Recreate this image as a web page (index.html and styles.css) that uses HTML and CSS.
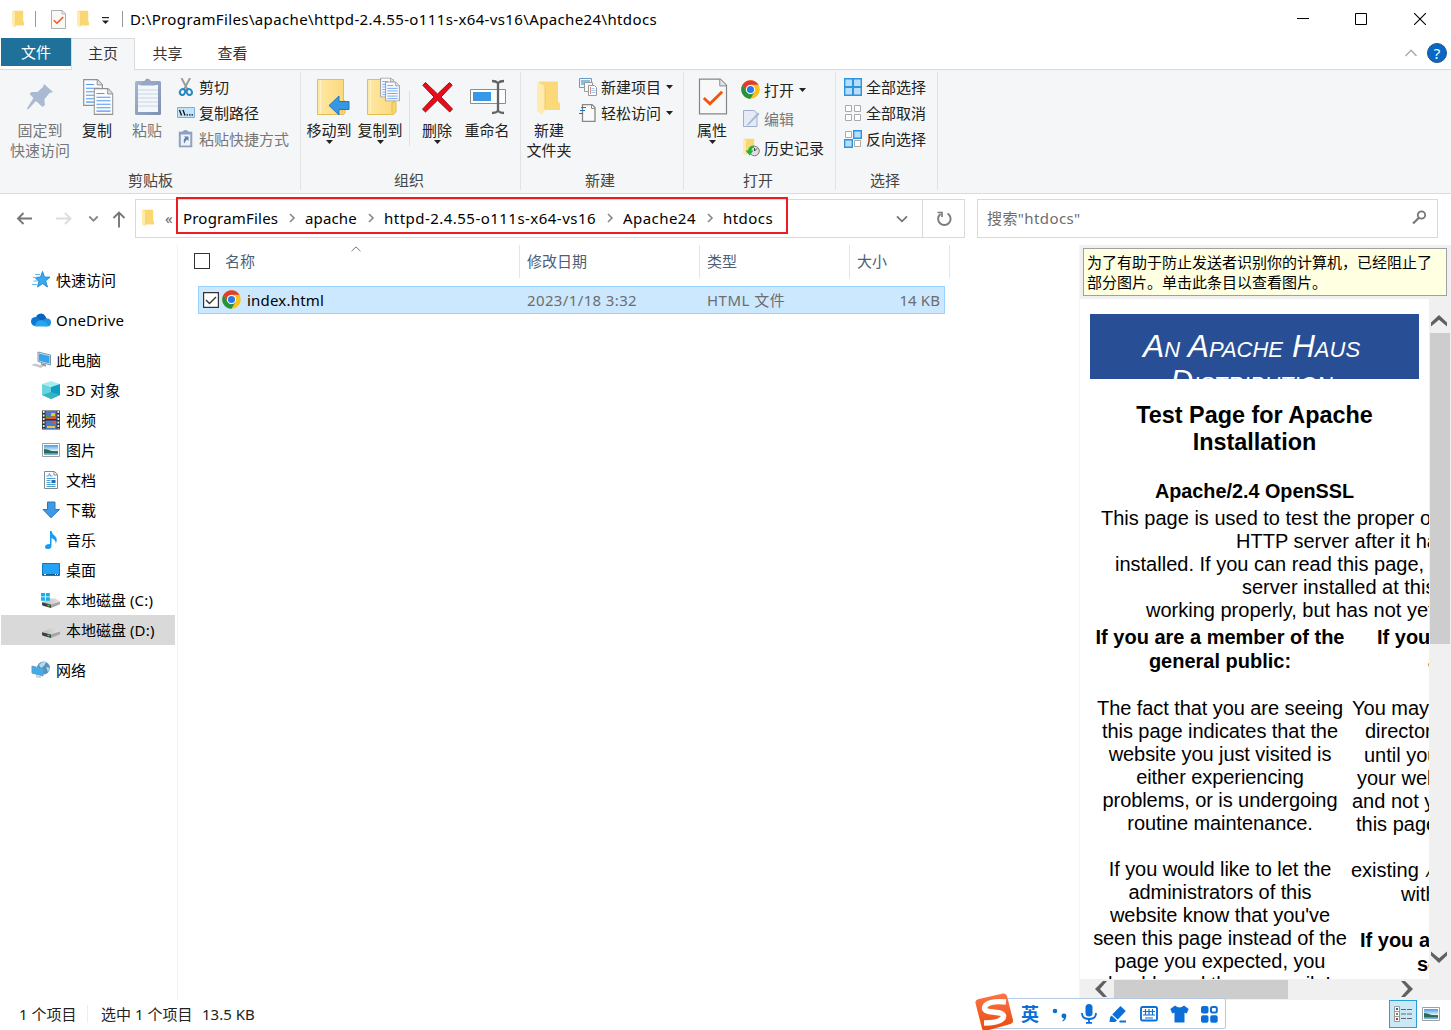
FILE: index.html
```html
<!DOCTYPE html>
<html lang="zh-CN">
<head>
<meta charset="utf-8">
<title>htdocs</title>
<link rel="stylesheet" href="styles.css">
</head>
<body>
<svg class="defs" width="0" height="0">
  <defs>
    <linearGradient id="gold" x1="0" x2="1"><stop offset="0" stop-color="#ffe9a6"/><stop offset="1" stop-color="#fbd97c"/></linearGradient>
    <linearGradient id="paste" x1="0" y1="0" x2="1" y2="1"><stop offset="0" stop-color="#a5b6cf"/><stop offset="1" stop-color="#7e90b2"/></linearGradient>
    <linearGradient id="sky" x1="0" y1="0" x2="0" y2="1"><stop offset="0" stop-color="#4a9be4"/><stop offset=".55" stop-color="#d8effa"/><stop offset=".56" stop-color="#3a7a68"/><stop offset=".75" stop-color="#3c7c9c"/><stop offset="1" stop-color="#8cc4e4"/></linearGradient>
    <linearGradient id="orange" x1="0" y1="0" x2="0" y2="1"><stop offset="0" stop-color="#fb7448"/><stop offset="1" stop-color="#ea4a0c"/></linearGradient>
    <linearGradient id="top" x1="0" x2="1"><stop offset="0" stop-color="#bdbdbd"/><stop offset="1" stop-color="#e4e4e4"/></linearGradient>
  </defs>
  <symbol id="folder" viewBox="0 0 13 18"><path d="M2 .8h10.200v10.500l.8 1v3.200H2z" fill="#fbd772"/><path d="M1 .8l3.800 1.800v13.600L4 17.600 1 15.400z" fill="#ffebad"/><path d="M4.600 2.800v13" stroke="#eec65c" stroke-width=".6"/></symbol>
  <symbol id="chrome" viewBox="0 0 48 48"><circle cx="24" cy="24" r="23.500" fill="#fbc116"/><path d="M3.700 12.200A23.500 23.500 0 0 1 44.400 12.300H24A11.700 11.700 0 0 0 13.900 29.900z" fill="#e33b2e"/><path d="M3.700 12.200L13.900 29.900A11.700 11.700 0 0 0 34.100 29.900L23.900 47.500A23.500 23.500 0 0 1 3.700 12.200z" fill="#229342"/><circle cx="24" cy="24" r="11.600" fill="#fff"/><circle cx="24" cy="24" r="9" fill="#2a78e8"/></symbol>
  <symbol id="picture" viewBox="0 0 18 14"><path d="M.5.500h17v13H.5z" fill="#fff" stroke="#a0a0a0"/><path d="M2 2h14v10H2z" fill="url(#sky)"/><path d="M2 6c5 0 7 3 14 3v1H2z" fill="#2c6a5c"/></symbol>
  <symbol id="check-page" viewBox="0 0 30 38"><path d="M1 1h21.500L29 7.500V37H1z" fill="#f8f8f8" stroke="#858585" stroke-width="1.300"/><path d="M22 1v7h7" fill="#e6e6e6" stroke="#858585"/><path d="M5.500 20.500l6.300 6L24.500 14" fill="none" stroke="#f1560d" stroke-width="3"/></symbol>
  <symbol id="page" viewBox="0 0 20 27"><path d="M.7.700h13.800l4.800 5V26.300H.7z" fill="#f9fbff" stroke="#919191" stroke-width="1.200"/><path d="M14.200.8v5.100h5" fill="#e3e3e3" stroke="#919191"/><path d="M3 5.500h8M3 9.300h14M3 12.700h14M3 16.200h14M3 19.700h14M3 23.100h14" stroke="#5796ef" stroke-width="1.100"/></symbol>
  <symbol id="chev-r" viewBox="0 0 8 10"><path d="M2 1l4 4-4 4" fill="none" stroke="#888" stroke-width="1.600"/></symbol>
  <symbol id="chev-d" viewBox="0 0 12 8"><path d="M1 1.300l5 5 5-5" fill="none" stroke="#747474" stroke-width="1.800"/></symbol>
  <symbol id="caret" viewBox="0 0 7 4"><path d="M0 0h7L3.500 4z" fill="#222"/></symbol>
  <symbol id="drive" viewBox="0 0 18 10"><path d="M0 4.200L7.500.5h6L18 3.500 9 6.500z" fill="url(#top)"/><path d="M0 4.200l9 2.300V10L1 7.800q-1-.5-1-1.500z" fill="#3f3f3f"/><path d="M9 6.500l9-3v2.800L9 10z" fill="#a5a5a5"/><path d="M5.500 7.200l2 .5" stroke="#35e04b" stroke-width="1.400"/></symbol>
</svg>

<header class="titlebar">
  <svg class="t-folder" width="13" height="18"><use href="#folder"/></svg>
  <i class="t-sep"></i>
  <svg class="t-check" width="15" height="19" viewBox="0 0 30 38"><use href="#check-page"/></svg>
  <svg class="t-folder2" width="13" height="18"><use href="#folder"/></svg>
  <svg class="t-caret" width="7" height="8" viewBox="0 0 7 8"><path d="M0 .6h7" stroke="#222" stroke-width="1.200"/><path d="M0 3.500h7L3.500 7z" fill="#222"/></svg>
  <i class="t-sep t-sep2"></i>
  <span class="path-title">D:\ProgramFiles\apache\httpd-2.4.55-o111s-x64-vs16\Apache24\htdocs</span>
  <div class="win-buttons">
    <svg width="12" height="12" viewBox="0 0 12 12"><path d="M0 5.500h12" stroke="#000"/></svg>
    <svg width="12" height="12" viewBox="0 0 12 12"><path d="M.5.500h11v11H.5z" fill="none" stroke="#000"/></svg>
    <svg width="12" height="12" viewBox="0 0 12 12"><path d="M0 0l12 12M12 0L0 12" stroke="#000" stroke-width="1.100"/></svg>
  </div>
</header>

<nav class="tabs">
  <span class="tab file">文件</span>
  <span class="tab active">主页</span>
  <span class="tab">共享</span>
  <span class="tab">查看</span>
  <div class="tab-tools">
    <svg width="12" height="8" viewBox="0 0 12 8"><path d="M.5 7L6 1.200 11.500 7" fill="none" stroke="#aaa" stroke-width="1.400"/></svg>
    <span class="help">?</span>
  </div>
</nav>

<section class="ribbon">
  <div class="group g-clip">
    <div class="tools">
      <div class="big off w70"><svg class="ico" viewBox="0 0 42 42"><path d="M25 8l9 8-3.500 1-5.200 6.500.7 5.500-2.500 2-6.500-6L9 33.500 8 32.300 14.500 22 10.500 18l2-2h6l5.500-5z" fill="#a9bad2"/></svg><span>固定到<br>快速访问</span></div>
      <div class="big w44"><svg class="ico" viewBox="0 0 42 42"><use href="#page" x="7" y="3" width="20" height="27"/><use href="#page" x="17.500" y="12" width="20" height="27"/></svg><span>复制</span></div>
      <div class="big off w56"><svg class="ico" viewBox="0 0 42 42"><rect x="9" y="5" width="26" height="34" rx="1.500" fill="url(#paste)"/><path d="M12 9h20v27H12z" fill="#f3f6fb"/><path d="M12 14h20M12 18h20M12 22h20M12 26h20M12 30h20" stroke="#c9d5e8"/><path d="M14.500 9.500q0-4 4-4.500 1-2.500 3-2.500T25 5q4 .5 4 4.500z" fill="#95a7c4"/></svg><span>粘贴</span></div>
      <div class="smalls s-clip">
        <div class="small"><svg width="18" height="18" viewBox="0 0 18 18"><path d="M4.500 0l6 11.500M13 0L7 11.500" stroke="#9a9a9a" stroke-width="1.900"/><ellipse cx="5.500" cy="14" rx="2.500" ry="3" fill="none" stroke="#2389c5" stroke-width="2" transform="rotate(25 5.500 14)"/><ellipse cx="12.300" cy="14" rx="2.500" ry="3" fill="none" stroke="#2389c5" stroke-width="2" transform="rotate(-25 12.300 14)"/></svg><span>剪切</span></div>
        <div class="small"><svg width="18" height="18" viewBox="0 0 18 18"><path d="M.5 3.500h17v10H.5z" fill="#c1e3fb" stroke="#7bb0d3"/><path d="M2.500 6l2 5.500M6 6l2 5.500M9.500 10.800h1.500M12 10.800h1.500M14.500 10.800H16" stroke="#111" stroke-width="1.300"/></svg><span>复制路径</span></div>
        <div class="small off"><svg width="18" height="18" viewBox="0 0 18 18"><path d="M1.800 1.700h13.500v15.600H1.800z" fill="#8fa1bf"/><path d="M3.800 4.500h9.500v11H3.800z" fill="#eef2f8"/><path d="M5 3.500Q5.500 0 8.500 0T12 3.500z" fill="#8fa1bf"/><path d="M7 6.500h4.500V11L10 9.500q-2 1.500-2.500 4-2-3 .7-5.700z" fill="#657fa9"/></svg><span>粘贴快捷方式</span></div>
      </div>
    </div>
    <div class="group-name">剪贴板</div>
  </div>
  <div class="group g-org">
    <div class="tools">
      <div class="big w50"><svg class="ico" viewBox="0 0 42 42"><path d="M9.500 3.500h26v35h-26z" fill="url(#gold)" stroke="#e5bd50"/><path d="M12.500 4v34" stroke="#fff2c5"/><path d="M34 37V26q3-3 3 0v11l-2 2" fill="#f9d66d" stroke="#e5bd50"/><path d="M21 29.500L31 20v5.500h10v8H31V39z" fill="#3697e5" stroke="#1d79c2"/></svg><span>移动到</span><svg class="down" width="7" height="4"><use href="#caret"/></svg></div>
      <div class="big w52"><svg class="ico" viewBox="0 0 42 42"><path d="M8.500 3.500h26v35h-26z" fill="url(#gold)" stroke="#e5bd50"/><path d="M11.500 4v34" stroke="#fff2c5"/><path d="M33 37V27q4-3 4 0v9l-2.500 2.500" fill="#f9d66d" stroke="#e5bd50"/><use href="#page" x="21" y="1.500" width="15" height="20"/><use href="#page" x="26" y="5.500" width="15" height="20"/></svg><span>复制到</span><svg class="down" width="7" height="4"><use href="#caret"/></svg></div>
      <i class="inner-sep"></i>
      <div class="big w54"><svg class="ico" viewBox="0 0 42 42"><path d="M9.500 6.500L21.500 18 33.500 6.500l2.700 2.700L25 21l11.500 12-2.800 3-12.200-11.800L9.500 36l-3-2.800L18 21 6.800 9.300z" fill="#e90c18" stroke="#991018" stroke-width="1"/></svg><span>删除</span><svg class="down" width="7" height="4"><use href="#caret"/></svg></div>
      <div class="big w46"><svg class="ico" viewBox="0 0 42 42"><path d="M4.500 13.500h35v14h-35z" fill="#fff" stroke="#8d8d8d"/><path d="M7 16h18v9H7z" fill="#3998e6"/><path d="M26 5q4 0 6 2 2-2 6-2M32 6v30M26 37q4 0 6-2 2 2 6 2" fill="none" stroke="#636363" stroke-width="2.300"/></svg><span>重命名</span></div>
    </div>
    <div class="group-name">组织</div>
  </div>
  <div class="group g-new">
    <div class="tools">
      <div class="big w52"><svg class="ico" viewBox="0 0 42 42"><path d="M11 5.500h19v20l2 2V34H11z" fill="#fbd978"/><path d="M9 5.500l8 5v24l-3 4-5-3.500z" fill="#ffebb0"/><path d="M17 10v23" stroke="#eec966"/></svg><span>新建<br>文件夹</span></div>
      <div class="smalls s-new">
        <div class="small"><svg width="18" height="18" viewBox="0 0 18 18"><path d="M.5.500h12v9H.5z" fill="#eef7fd" stroke="#6b9cbe"/><path d="M2 2h9v5H2z" fill="#8cbfdd"/><path d="M5.500 4.500h8v9h-8z" fill="#f7f7f7" stroke="#999"/><path d="M9.500 7.500h6l2 2v8h-8z" fill="#fff" stroke="#999"/><path d="M11.500 9v7" stroke="#dc8c8c"/><path d="M12.500 10.500h3M12.500 12.500h4M12.500 14.500h4" stroke="#a9c5ee"/></svg><span>新建项目</span><svg class="side" width="7" height="4"><use href="#caret"/></svg></div>
        <div class="small"><svg width="18" height="18" viewBox="0 0 18 18"><path d="M3.500.600h9.500l3 3v13.800H3.500z" fill="#fafafa" stroke="#888" stroke-width="1.300"/><path d="M12.500 1v3.500H16" fill="none" stroke="#888"/><path d="M2 3.500h5M1 6.500h5M0 9.500h4" stroke="#1879bd" stroke-width="1.200"/></svg><span>轻松访问</span><svg class="side" width="7" height="4"><use href="#caret"/></svg></div>
      </div>
    </div>
    <div class="group-name">新建</div>
  </div>
  <div class="group g-open">
    <div class="tools">
      <div class="big w48"><svg class="ico" viewBox="0 0 42 42"><use href="#check-page" x="7.500" y="2" width="29" height="37"/></svg><span>属性</span><svg class="down" width="7" height="4"><use href="#caret"/></svg></div>
      <div class="smalls s-open">
        <div class="small"><svg width="19" height="19"><use href="#chrome"/></svg><span>打开</span><svg class="side" width="7" height="4"><use href="#caret"/></svg></div>
        <div class="small off"><svg width="19" height="19" viewBox="0 0 19 19"><path d="M2.500 1.500h11l2.500 3v13H2.500z" fill="#e4ebf6" stroke="#9eb0cc"/><path d="M6.500 15L17 3.500l1.500 1.500L8 15.500 5.500 17z" fill="#a4b6d2"/></svg><span>编辑</span></div>
        <div class="small"><svg width="19" height="19" viewBox="0 0 19 19"><use href="#folder" x="1" y="0" width="13" height="18"/><circle cx="13.500" cy="13" r="4.800" fill="#dedede" stroke="#777"/><path d="M13.500 13l2.500-2.500M13.500 13v-3" stroke="#444"/><path d="M13 7.500q-5 0-6 5H4.500l4.200 5 3.800-5h-2q.5-3 2.500-3z" fill="#20b33b"/></svg><span>历史记录</span></div>
      </div>
    </div>
    <div class="group-name">打开</div>
  </div>
  <div class="group g-sel">
    <div class="tools">
      <div class="smalls s-sel">
        <div class="small"><svg width="18" height="18" viewBox="0 0 18 18"><path d="M.7.700h16.600v16.600H.7z" fill="#b7dffb" stroke="#2d94df" stroke-width="1.400"/><path d="M9 0v18M0 9h18" stroke="#2d94df" stroke-width="2"/></svg><span>全部选择</span></div>
        <div class="small"><svg width="18" height="18" viewBox="0 0 18 18"><path d="M1.500 1.500h6v6h-6zM10.500 1.500h6v6h-6zM1.500 10.500h6v6h-6zM10.500 10.500h6v6h-6z" fill="#fff" stroke="#aaa"/></svg><span>全部取消</span></div>
        <div class="small"><svg width="18" height="18" viewBox="0 0 18 18"><path d="M1.500 1.500h6v6h-6zM10.500 10.500h6v6h-6z" fill="#fff" stroke="#aaa"/><path d="M9.700.700h7.600v7.600H9.700zM.7 9.700h7.600v7.600H.7z" fill="#b7dffb" stroke="#2d94df" stroke-width="1.400"/></svg><span>反向选择</span></div>
      </div>
    </div>
    <div class="group-name">选择</div>
  </div>
</section>

<section class="navbar">
  <div class="nav-arrows">
    <svg width="120" height="20" viewBox="0 0 120 20"><path d="M16 9.500H1.500M7.500 4L2 9.500 7.500 15" fill="none" stroke="#777" stroke-width="1.900"/><path d="M40 9.500h14.500M49 4l5.500 5.500L49 15" fill="none" stroke="#ddd" stroke-width="1.900"/><path d="M73.300 7.500l4.200 4.200 4.200-4.200" fill="none" stroke="#888" stroke-width="1.800"/><path d="M103 18.500v-15M97.500 9L103 3.500l5.500 5.500" fill="none" stroke="#777" stroke-width="1.900"/></svg>
  </div>
  <div class="address">
    <svg class="a-folder" width="13" height="18"><use href="#folder"/></svg>
    <span class="laquo">«</span>
    <span class="crumb c1">ProgramFiles<svg width="8" height="10"><use href="#chev-r"/></svg></span>
    <span class="crumb c2">apache<svg width="8" height="10"><use href="#chev-r"/></svg></span>
    <span class="crumb c3">httpd-2.4.55-o111s-x64-vs16<svg width="8" height="10"><use href="#chev-r"/></svg></span>
    <span class="crumb c4">Apache24<svg width="8" height="10"><use href="#chev-r"/></svg></span>
    <span class="crumb c5">htdocs</span>
    <svg class="a-chev" width="12" height="8"><use href="#chev-d"/></svg>
    <span class="refresh"><svg width="16" height="16" viewBox="0 0 16 16"><path d="M11.500 2.500A6.200 6.200 0 1 1 4.500 3" fill="none" stroke="#7c7c7c" stroke-width="1.900"/><path d="M1.500 1.500H6V6" fill="none" stroke="#7c7c7c" stroke-width="1.700"/></svg></span>
    <i class="red-frame"></i>
  </div>
  <div class="search"><span>搜索"htdocs"</span><svg width="15" height="15" viewBox="0 0 15 15"><circle cx="9.500" cy="5" r="3.700" fill="none" stroke="#777" stroke-width="1.800"/><path d="M7 7.800L1 13.500" stroke="#777" stroke-width="2.200"/></svg></div>
</section>

<main class="body">
  <aside class="sidebar">
    <div class="node root"><svg width="20" height="18" viewBox="0 0 20 18"><path d="M11.500.5l2 5.500 5.500.2-4.300 3.600L16.500 16l-5-3.300L6.500 16l1.300-5.500L4 6.500l5.500-.5z" fill="#35aaf0" stroke="#1a76c5" stroke-width=".8"/><path d="M4 3.500h5M2 6.500h4M2.500 10h4M1 13.500h5" stroke="#65b9ef"/></svg>快速访问</div>
    <div class="node root gap"><svg width="20" height="18" viewBox="0 0 20 18"><path d="M5 8a5 5 0 0 1 9.500-2.500L17 10H5z" fill="#0b63bd"/><circle cx="4.500" cy="10.500" r="4.500" fill="#0c78d6"/><circle cx="16" cy="11.500" r="4" fill="#1b92e5"/><path d="M4 15q1-6 6.500-6 3 0 7.500 6z" fill="#28a4ec"/><path d="M4 14h12v1.500H4z" fill="#28a4ec"/></svg><span class="lat">OneDrive</span></div>
    <div class="node root gap"><svg width="20" height="18" viewBox="0 0 20 18"><path d="M7 1l12.500 3v10L7 10.500z" fill="#dceef8" stroke="#7f94a3"/><path d="M8 2.400l10.500 2.500v7.700L8 9.700z" fill="#37a3ed"/><path d="M10 12l5 1.500v2l-5-1z" fill="#999"/><path d="M0 14l4-1.500 9 2.500-3 2z" fill="#c5cbd0"/></svg>此电脑</div>
    <div class="node"><svg width="20" height="18" viewBox="0 0 20 18"><path d="M10 0l9 3-9 3-9-3z" fill="#a5edf2"/><path d="M1 3l9 3v12l-9-4z" fill="#6ad3dc"/><path d="M19 3l-9 3v12l9-4z" fill="#0e9ec4"/><path d="M1 14l9-3 9 3-9 4z" fill="#35b4c4"/></svg><span class="lat">3D 对象</span></div>
    <div class="node"><svg width="20" height="20" viewBox="0 0 20 20"><path d="M1 .500h18v19H1z" fill="#333"/><path d="M4.500 1h11v8h-11zM4.500 10.500h11V19h-11z" fill="#4c79cd"/><path d="M2.700 1v18M17.300 1v18" stroke="#eee" stroke-width="1.700" stroke-dasharray="2 1.500"/><path d="M5 7h5l3-4 2 4v2H5zM11 11h4v3h-3z" fill="#da5b2b"/><path d="M10 3h4v3h-4zM6 16h8v2H6z" fill="#e8c733"/><path d="M5 5h3v3H5z" fill="#459b45"/></svg>视频</div>
    <div class="node"><svg width="20" height="14"><use href="#picture" x="1" width="18" height="14"/></svg>图片</div>
    <div class="node"><svg width="20" height="18" viewBox="0 0 20 18"><path d="M3.500.500h10l3 3v14h-13z" fill="#fcfcfc" stroke="#888"/><path d="M13 1v3h3" fill="none" stroke="#888"/><path d="M5.500 5h2l1-2.500 1 2.500h2M5.500 7.500h9M5.500 9.500h4M5.500 11.500h4M5.500 13.500h9M5.500 15.500h9" fill="none" stroke="#4ba0d9"/><path d="M10.500 9h4v3h-4z" fill="#236dae"/></svg>文档</div>
    <div class="node"><svg width="20" height="18" viewBox="0 0 20 18"><path d="M6.500 1h7.500v7.500h4.500L10 16.800 2 8.500h4.500z" fill="#3e9ae8" stroke="#2a78bc"/></svg>下载</div>
    <div class="node"><svg width="20" height="18" viewBox="0 0 20 18"><path d="M9 0h1.500q.5 3 3.500 5 3 3 .8 7.500 0-4-4.300-5.500V15q0 2.500-3 3-3.500.3-3.500-2 0-3 5-3z" fill="#169cf3"/></svg>音乐</div>
    <div class="node"><svg width="20" height="18" viewBox="0 0 20 18"><path d="M1.500 2.500h17v12h-17z" fill="#24a2f6" stroke="#1578bc"/><path d="M2 13.500h16" stroke="#075a95"/><path d="M3 13.500h2M14 13.500h1M16 13.500h1" stroke="#fff"/></svg>桌面</div>
    <div class="node"><svg width="20" height="18" viewBox="0 0 20 18"><use href="#drive" x="1" y="7" width="18" height="10"/><path d="M0 2h4v3.500H0zM4.800 2h4v3.500h-4zM0 6.300h4v3.500H0zM4.800 6.300h4v3.500h-4z" fill="#13b0ed"/></svg><span>本地磁盘 <span class="lat">(C:)</span></span></div>
    <div class="node selected"><svg width="20" height="18" viewBox="0 0 20 18"><use href="#drive" x="1" y="7" width="18" height="10"/></svg><span>本地磁盘 <span class="lat">(D:)</span></span></div>
    <div class="node root gap"><svg width="20" height="18" viewBox="0 0 20 18"><circle cx="12.500" cy="7" r="6.500" fill="#5693bd"/><path d="M8 4q3-4 7-3l-2 4-3 2zM15 6l4 1-2 4z" fill="#b5dbe9"/><path d="M1 5l11 3v7L1 12z" fill="#3badf1" stroke="#6c9dbb"/><path d="M5 14l5 1.500v1.500l-5-.5z" fill="#bdd2dd"/></svg>网络</div>
  </aside>

  <section class="files">
    <div class="file-head">
      <div class="col name"><i class="box"></i>名称<svg class="sort" width="10" height="6" viewBox="0 0 10 6"><path d="M.5 5.200L5 .900l4.500 4.300" fill="none" stroke="#777"/></svg></div>
      <div class="col date">修改日期</div>
      <div class="col type">类型</div>
      <div class="col size">大小</div>
    </div>
    <div class="file-row">
      <svg class="box-on" width="16" height="16" viewBox="0 0 16 16"><path d="M.6.600h14.800v14.800H.6z" fill="#fff" stroke="#333" stroke-width="1.200"/><path d="M3 8l3.500 3.500L13 5" fill="none" stroke="#333" stroke-width="1.400"/></svg>
      <svg class="f-icon" width="19" height="19"><use href="#chrome"/></svg>
      <span class="f-name">index.html</span>
      <span class="f-date">2023/1/18 3:32</span>
      <span class="f-type">HTML 文件</span>
      <span class="f-size">14 KB</span>
    </div>
  </section>

  <section class="preview">
    <div class="notice">为了有助于防止发送者识别你的计算机，已经阻止了<br>部分图片。单击此条目以查看图片。</div>
    <div class="viewport">
      <article class="doc">
        <div class="banner">An Apache Haus<br>Distribution</div>
        <h1>Test Page for Apache<br>Installation</h1>
        <h2>Apache/2.4 OpenSSL</h2>
        <div class="intro">
          <p class="i1">This page is used to test the proper op</p>
          <p class="i2">HTTP server after it has</p>
          <p class="i3">installed. If you can read this page, it</p>
          <p class="i4">server installed at this</p>
          <p class="i5">working properly, but has not yet</p>
        </div>
        <div class="columns">
          <div class="left">
            <h3>If you are a member of the<br>general public:</h3>
            <p>The fact that you are seeing<br>this page indicates that the<br>website you just visited is<br>either experiencing<br>problems, or is undergoing<br>routine maintenance.</p>
            <p>If you would like to let the<br>administrators of this<br>website know that you've<br>seen this page instead of the<br>page you expected, you<br>should send them e-mail. In</p>
          </div>
          <div class="right">
            <h3><span class="r1">If you</span><span class="r2">a</span></h3>
            <p class="r3">You may</p><p class="r4">director</p><p class="r5">until you</p><p class="r6">your web</p><p class="r7">and not y</p><p class="r8">this page</p>
            <p class="r9">existing <small>/</small></p><p class="r10">with</p>
            <h3 class="more"><span class="r11">If you a</span><span class="r12">so</span></h3>
          </div>
        </div>
      </article>
      <div class="vbar">
        <svg width="18" height="14" viewBox="0 0 18 14"><path d="M1 9.500l8-7.500 8 7.500v4L9 6.800l-8 6.700z" fill="#606060"/></svg>
        <i class="thumb"></i>
        <svg width="18" height="14" viewBox="0 0 18 14"><path d="M1 4.500L9 12l8-7.500v-4L9 7.200 1 .5z" fill="#606060"/></svg>
      </div>
    </div>
    <div class="hbar">
      <svg width="14" height="18" viewBox="0 0 14 18"><path d="M9 1L1 9l8 8h4L6 9l7-8z" fill="#606060"/></svg>
      <i class="thumb"></i>
      <svg class="hright" width="14" height="18" viewBox="0 0 14 18"><path d="M5 1l8 8-8 8H1l7-8-7-8z" fill="#606060"/></svg>
    </div>
  </section>
</main>

<footer class="status">
  <span class="count">1 个项目</span><i class="s-sep"></i><span class="chosen">选中 1 个项目</span><span class="kb">13.5 KB</span>
  <div class="views">
    <span class="view-on"><svg width="18" height="16" viewBox="0 0 18 16"><path d="M.5.500h5v15h-5zM.5 5.500h5M.5 10.500h5" fill="#fff" stroke="#999"/><path d="M2 3h2" stroke="#268" stroke-width="2"/><path d="M2 8h2" stroke="#692" stroke-width="2"/><path d="M2 13h2" stroke="#c22" stroke-width="2"/><path d="M7 3.500h5M13 3.500h5M7 8h5M13 8h5M7 12.500h5M13 12.500h5" stroke="#666"/></svg></span>
    <svg width="18" height="14"><use href="#picture"/></svg>
  </div>
</footer>

<div class="ime">
  <svg class="sogou" width="42" height="40" viewBox="0 0 42 40"><path d="M5 6L29 .600q3-.6 4 2.400l6 24q.7 3-2.500 4L12 37.800q-3 .8-4-2.200L1.500 10Q1 7 5 6z" fill="url(#orange)"/><path d="M32 9Q17 7.500 12 12q-4 5 3 6.500l11 1.500q6 2 2 6-4 4-18 4" fill="none" stroke="#fff" stroke-width="5.500"/></svg>
  <span class="en">英</span>
  <svg width="16" height="18" viewBox="0 0 16 18"><circle cx="3" cy="6" r="2.300" fill="#0b6fd8"/><path d="M9.500 11a2.400 2.400 0 1 1 4.700.5q0 3-3.400 5l-.6-.8q1.500-1 1.700-2.500-2.400 0-2.400-2.200z" fill="#0b6fd8"/></svg>
  <svg width="16" height="20" viewBox="0 0 16 20"><rect x="4.500" y="0" width="7" height="12.500" rx="3.500" fill="#0b6fd8"/><path d="M1 9q0 6 7 6t7-6" fill="none" stroke="#0b6fd8" stroke-width="1.800"/><path d="M8 15v3M5 18.800h6" stroke="#0b6fd8" stroke-width="1.800"/></svg>
  <svg width="18" height="18" viewBox="0 0 18 18"><path d="M11.500 1l5.300 5-8 8.500-5.600-5zM2.500 10.500L8 15.500 6 17H.5l.5-4.500z" fill="#0b6fd8"/><path d="M10.500 16.500H17" stroke="#0b6fd8" stroke-width="2"/></svg>
  <svg width="18" height="16" viewBox="0 0 18 16"><rect x="1" y="1" width="16" height="13.500" rx="1.500" fill="none" stroke="#0b6fd8" stroke-width="1.900"/><path d="M3 5.500h12M3 9h12M5.500 3v6M9 3v6M12.500 3v6M5 12h8" stroke="#0b6fd8" stroke-width="1.200"/></svg>
  <svg width="19" height="18" viewBox="0 0 19 18"><path d="M5 .500q4.500 4 9 0l4.700 3.500-2 4.500-2.200-.7V17.500H4.500V7.800l-2.200.7-2-4.500z" fill="#0b6fd8"/></svg>
  <svg width="17" height="17" viewBox="0 0 17 17"><rect width="7.500" height="7.500" rx="2" fill="#0b6fd8"/><rect x="10" y="1" width="5.800" height="5.500" rx="1.500" fill="none" stroke="#0b6fd8" stroke-width="2"/><rect y="9.200" width="7.500" height="7.500" rx="2" fill="#0b6fd8"/><rect x="9.200" y="9.200" width="7.500" height="7.500" rx="2" fill="#0b6fd8"/></svg>
</div>
</body>
</html>
```
FILE: styles.css
```css
* { box-sizing: border-box; }
html, body { margin: 0; height: 1030px; overflow: hidden; }
body {
  position: relative;
  width: 1451px;
  display: flex;
  flex-direction: column;
  background: #fff;
  color: #1a1a1a;
  font: 15px/20px "Noto Sans", "Noto Sans CJK SC", sans-serif;
  white-space: nowrap;
}
svg { display: block; flex: none; }
i { display: block; flex: none; }
.defs { position: absolute; }
.lat { letter-spacing: 0.2px; }

.titlebar { height: 38px; display: flex; align-items: center; padding-left: 11px; color: #000; }
.t-sep { width: 1px; height: 16px; margin-left: 11px; background: #999; }
.t-check { margin-left: 15px; }
.t-folder2 { margin-left: 10px; }
.t-caret { margin: 4px 0 0 13px; }
.t-sep2 { margin-left: 13px; }
.path-title { margin-left: 7px; letter-spacing: 0.37px; }
.win-buttons { display: flex; gap: 47px; margin: 0 25px 0 auto; }
.win-buttons svg:first-child { margin-right: -1px; }

.tabs { height: 32px; display: flex; border-bottom: 1px solid #dadbdc; padding-left: 1px; }
.tab { width: 65px; height: 31px; text-align: center; line-height: 31px; color: #333; }
.tab.file { width: 70px; height: 28px; line-height: 29px; background: #1f7199; color: #fff; }
.tab.active { width: 64px; height: 32px; background: #f5f6f7; border: 1px solid #dadbdc; border-bottom: 0; line-height: 29px; }
.tab-tools { display: flex; align-items: center; gap: 10px; margin: 0 4px 2px auto; }
.help { width: 20px; height: 20px; border-radius: 50%; background: #0a68c5; border: 1px solid #235488; color: #fff; text-align: center; line-height: 18px; }

.ribbon { height: 124px; display: flex; background: #f5f6f7; border-bottom: 1px solid #dadbdc; padding-top: 2px; }
.group { height: 118px; border-right: 1px solid #e1e2e3; }
.tools { height: 98px; display: flex; }
.group-name { height: 20px; padding-left: 1px; text-align: center; color: #444; line-height: 21px; }
.g-clip { width: 301px; } .g-clip .tools { padding-left: 5px; }
.g-org { width: 220px; } .g-org .tools { padding-left: 3px; } .g-org .group-name { padding-right: 4px; }
.g-new { width: 163px; } .g-new .tools { padding-left: 2px; } .g-new .group-name { padding-right: 5px; }
.g-open { width: 152px; } .g-open .tools { padding-left: 4px; } .g-open .group-name { padding-right: 4px; }
.g-sel { width: 102px; } .g-sel .group-name { padding-right: 4px; }
.big { display: flex; flex-direction: column; align-items: center; padding-top: 4px; text-align: center; color: #222; }
.ico { width: 42px; height: 42px; margin-bottom: 2px; }
.big.off, .small.off { color: #777; }
.down { margin-left: 1px; }
.w44 { width: 44px; } .w46 { width: 46px; } .w48 { width: 48px; } .w50 { width: 50px; }
.w52 { width: 52px; } .w54 { width: 54px; } .w56 { width: 56px; } .w70 { width: 70px; }
.inner-sep { width: 1px; height: 55px; margin: 19px 0 0 3px; background: #dfe0e1; }
.smalls { display: flex; flex-direction: column; padding-top: 2px; }
.small { height: 26px; display: flex; align-items: center; gap: 3px; color: #222; }
.side { margin-left: 3px; }
.s-clip { margin-left: 2px; }
.s-clip .small { gap: 4px; }
.s-new { margin-left: 4px; }
.s-new .small span { margin-left: 1px; }
.s-new .side { margin-left: 2px; }
.s-open { margin-left: 5px; padding-top: 3px; }
.s-open .small { height: 29px; gap: 4px; }
.s-open .side { margin-left: 1px; }
.s-sel { margin-left: 8px; }
.s-sel .small { gap: 4px; }

.navbar { height: 51px; display: flex; padding: 5px 13px 0 0; }
.nav-arrows { width: 135px; padding: 10px 0 0 16px; }
.address { position: relative; width: 830px; height: 39px; border: 1px solid #d9d9d9; display: flex; align-items: center; padding: 0 0 2px 5px; color: #000; }
.laquo { width: 30px; padding-left: 12px; color: #666; }
.crumb { display: flex; align-items: center; justify-content: space-between; }
.crumb svg { margin-right: 9px; }
.a-folder { margin-right: -1px; }
.c1 { width: 122px; letter-spacing: 0.2px; }
.c2 { width: 79px; letter-spacing: 0.15px; }
.c3 { width: 239px; letter-spacing: 0.47px; }
.c4 { width: 100px; letter-spacing: 0.45px; }
.c5 { letter-spacing: 0.45px; }
.a-chev { margin: 2px 0 0 auto; }
.refresh { display: flex; align-items: center; justify-content: center; width: 42px; height: 37px; margin: 2px 0 0 14px; border-left: 1px solid #d9d9d9; }
.red-frame { position: absolute; left: 40px; top: -3px; width: 612px; height: 37px; border: 2px solid #ed1c24; }
.search { width: 461px; height: 39px; margin-left: 12px; border: 1px solid #d9d9d9; display: flex; align-items: center; justify-content: space-between; padding: 0 10px 2px 9px; color: #6d6d6d; }
.search span { letter-spacing: 0.4px; }

.body { height: 755px; display: flex; }
.sidebar { width: 178px; border-right: 1px solid #f1f1f1; padding: 20px 2px 0 1px; color: #000; }
.node { height: 30px; display: flex; align-items: center; gap: 5px; padding-left: 40px; }
.node.root { padding-left: 30px; }
.node.gap { margin-top: 10px; }
.node.selected { background: #d9d9d9; }

.files { width: 901px; }
.file-head { height: 33px; display: flex; color: #4c607a; }
.col { height: 33px; border-right: 1px solid #e5e5e5; padding-left: 7px; line-height: 33px; }
.name { position: relative; width: 342px; padding-left: 16px; display: flex; align-items: center; }
.box { width: 16px; height: 16px; margin: -2px 15px 0 0; border: 1px solid #333; background: #fff; }
.sort { position: absolute; left: 173px; top: 1px; }
.date { width: 180px; } .type { width: 150px; } .size { width: 100px; }
.file-row { width: 747px; height: 28px; margin: 8px 0 0 20px; display: flex; align-items: center; background: #cce8ff; border: 1px solid #99d1ff; padding: 0 4px; color: #6d6d6d; }
.box-on { margin-right: 3px; }
.f-icon { margin-top: -2px; }
.f-name { width: 280px; margin-left: 6px; color: #000; letter-spacing: 0.2px; }
.f-date { width: 180px; letter-spacing: 0.37px; } .f-type { width: 120px; letter-spacing: 0.5px; } .f-size { margin-left: auto; letter-spacing: 0.1px; }

.preview { width: 372px; border-left: 1px solid #f5f5f5; background: #f0f0f0; }
.notice { width: 364px; height: 48px; margin: 3px 0 3px 3px; background: #ffffe1; border: 1px solid #a0a0a0; padding: 3px; color: #000; }
.viewport { height: 680px; display: flex; }
.doc { width: 349px; height: 680px; overflow: hidden; background: #fff; padding: 15px 10px 0; color: #000; font: 20px/23px "Liberation Sans", sans-serif; }
.doc p, .doc h1, .doc h2, .doc h3 { margin: 0; }
.banner { height: 65px; padding-top: 15px; overflow: hidden; background: #284e96; color: #fff; font: italic small-caps 31.8px/35px "Liberation Sans", sans-serif; text-align: center; padding-right: 6px; }
.doc h1 { margin: 23px 0 0; font-size: 23.4px; line-height: 27px; text-align: center; }
.doc h2 { margin: 23px 0 0; font-size: 19.8px; line-height: 24px; text-align: center; }
.intro { margin-top: 4px; }
.i1 { padding-left: 11px; } .i2 { padding-left: 146px; } .i3 { padding-left: 25px; } .i4 { padding-left: 152px; } .i5 { padding-left: 56px; }
.columns { display: flex; margin-top: 3px; }
.left { width: 260px; flex: none; text-align: center; }
.doc h3 { font-size: 20px; line-height: 24px; }
.left p { margin: 24px 0 23px; letter-spacing: -0.07px; }
.left p + p { margin-top: 23px; }
.right { width: 300px; flex: none; margin-left: 1px; }
.right h3 span { display: block; }
.r1 { padding-left: 26px; } .r2 { padding-left: 77px; }
.right .r3 { padding-left: 1px; margin-top: 24px; }
.r4 { padding-left: 14px; } .r5 { padding-left: 13px; padding-top: 1px; } .r6 { padding-left: 6px; } .r7 { padding-left: 1px; } .r8 { padding-left: 5px; }
.right .r9 { margin-top: 23px; } .r10 { padding-left: 50px; padding-top: 1px; }
.r9 small { font: 17px/1 "Liberation Mono", monospace; }
.right .more { margin-top: 22px; }
.r11 { padding-left: 9px; } .r12 { padding-left: 66px; }
.vbar { width: 22px; display: flex; flex-direction: column; align-items: center; padding: 14px 2px 14px 0; }
.vbar .thumb { width: 20px; height: 311px; margin: 6px -1px auto 1px; background: #cdcdcd; }
.hbar { height: 21px; display: flex; align-items: center; padding: 0 0 1px 14px; }
.hbar .thumb { width: 174px; height: 19px; margin: 1px 0 0 6px; background: #cdcdcd; }
.hright { margin-left: 112px; }

.status { height: 30px; display: flex; align-items: center; padding: 0 11px 2px 19px; color: #222; }
.count { width: 68px; }
.s-sep { width: 1px; height: 18px; background: #eee; }
.chosen { margin-left: 13px; width: 101px; }
.views { display: flex; align-items: center; gap: 5px; margin-left: auto; }
.view-on { width: 28px; height: 28px; display: flex; align-items: center; justify-content: center; background: #cbe8f6; border: 1px solid #26a0da; }

.ime { position: absolute; left: 989px; top: 998px; width: 237px; height: 31px; display: flex; align-items: center; gap: 12.4px; padding-left: 31px; background: #fff; border: 1px solid #b5c8e2; border-radius: 2px; }
.ime svg { margin-top: 1px; }
.ime .sogou { position: absolute; left: -16px; top: -7px; }
.en { color: #0b6fd8; font-weight: 700; font-size: 18px; margin-right: 1px; }
```
